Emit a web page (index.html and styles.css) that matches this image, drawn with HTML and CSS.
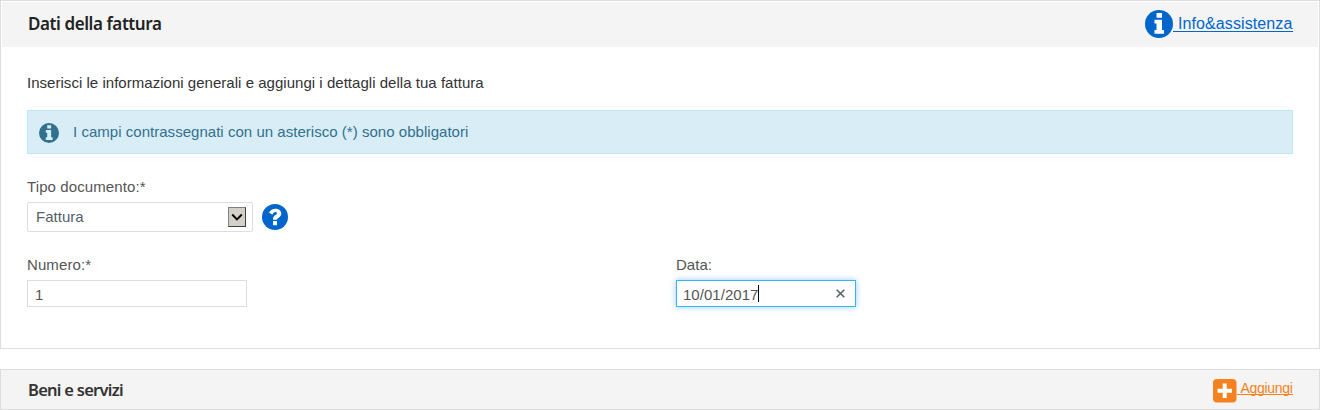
FILE: index.html
```html
<!DOCTYPE html>
<html lang="it">
<head>
<meta charset="utf-8">
<title>Dati della fattura</title>
<link rel="stylesheet" href="styles.css">
</head>
<body>
<section class="panel panel-main">
  <header class="panel-header">
    <h2 class="title">Dati della fattura</h2>
    <a class="help-link" href="#">
      <svg class="help-icon" viewBox="0 0 28 28"><circle cx="14" cy="14" r="14" fill="#0066cc"/><path fill="#fff" d="M11.500 3h5.500v4.700h-5.500zM9.500 9.700H17v10.300h2v3.800H9.500V20h2v-6.500h-2z"/></svg><span class="help-text">&nbsp;Info&amp;assistenza</span>
    </a>
  </header>
  <div class="panel-body">
    <p class="intro">Inserisci le informazioni generali e aggiungi i dettagli della tua fattura</p>
    <div class="alert">
      <svg class="alert-icon" viewBox="0 0 28 28"><circle cx="14" cy="14" r="14" fill="#31708f"/><path fill="#d9edf7" d="M11.500 3h5.500v4.700h-5.500zM9.500 9.700H17v10.300h2v3.800H9.500V20h2v-6.500h-2z"/></svg>
      <span class="alert-text">I campi contrassegnati con un asterisco (*) sono obbligatori</span>
    </div>
    <div class="field field-type">
      <div class="label label-type">Tipo documento:*</div>
      <div class="select-row">
        <div class="select"><span>Fattura</span>
          <span class="select-button"><svg class="chevron" viewBox="0 0 12 8"><path d="M1.200 1.500L6 6.300L10.800 1.500" fill="none" stroke="#000" stroke-width="1.900"/></svg></span>
        </div>
        <svg class="question" viewBox="0 0 26 26"><circle cx="13" cy="13" r="13" fill="#0066cc"/><path fill="#fff" d="M7 8.700C8.400 6 10.500 4.700 13.300 4.700c3.400 0 6 2 6 4.900 0 2.100-1.200 3.300-2.800 4.300-1.100.7-1.500 1-1.500 1.900h-4c0-2.600.7-3.700 2.500-4.800 1-.6 1.400-.9 1.400-1.600 0-.8-.7-1.300-1.600-1.300-1.200 0-1.800.7-2.800 2.400zM11 17h4v4.300h-4z"/></svg>
      </div>
    </div>
    <div class="columns">
      <div class="field">
        <div class="label label-number">Numero:*</div>
        <div class="input input-number">1</div>
      </div>
      <div class="field">
        <div class="label">Data:</div>
        <div class="input input-date"><span class="date">10/01/2017</span><span class="caret"></span>
          <svg class="clear" viewBox="0 0 9 9"><path d="M.7.700l7.600 7.600M8.300.700L.7 8.300" stroke="#4f5e68" stroke-width="1.500"/></svg>
        </div>
      </div>
    </div>
  </div>
</section>
<section class="panel panel-items">
  <h2 class="title title-items">Beni e servizi</h2>
  <a class="add-link" href="#">
    <svg class="add-icon" viewBox="0 0 24 24"><rect width="23.500" height="23.500" rx="4" fill="#f58220"/><path fill="#fff" d="M9.700 4.500h4v5.200H19v4h-5.300V19h-4v-5.300H4.500v-4h5.200z"/></svg><span class="add-text">&nbsp;Aggiungi</span>
  </a>
</section>
</body>
</html>
```
FILE: styles.css
```css
* { box-sizing: border-box; }
body {
  margin: 0;
  background: #fff;
  color: #333;
  font: 15px/20px "Liberation Sans", Arial, sans-serif;
  letter-spacing: 0.03px;
  overflow: hidden;
}
.panel { border: 1px solid #ddd; background: #fff; }
.panel-main { height: 349px; padding: 1px; }
.panel-header {
  height: 45px;
  padding: 0 25.5px 0 26px;
  background: #f4f4f4;
  display: flex;
  justify-content: space-between;
}
.title {
  margin: 0;
  padding-top: 10px;
  color: #222;
  font: 600 17px/24px "Noto Sans", "Open Sans", sans-serif;
  letter-spacing: -0.42px;
}
.help-link { display: flex; padding-top: 8px; color: #0066cc; text-decoration: none; }
.help-icon { width: 28px; height: 28px; }
.help-text { font-size: 16px; line-height: 19px; height: 22px; padding-top: 4px; border-bottom: 1px solid #0066cc; letter-spacing: 0.11px; }
.panel-body { padding: 26px 25px 0; }
.intro { margin: 0; }
.alert {
  display: flex;
  align-items: center;
  gap: 14px;
  height: 44px;
  margin-top: 17px;
  padding: 0 11px;
  border: 1px solid #bce8f1;
  background: #d9edf7;
  color: #31708f;
}
.alert-icon { width: 20px; height: 20px; margin-top: 2px; }
.field-type { margin-top: 23px; }
.label { color: #555; }
.label-type, .label-number { letter-spacing: 0.1px; }
.select-row { display: flex; align-items: center; gap: 9px; margin-top: 5px; }
.select {
  display: flex;
  align-items: center;
  justify-content: space-between;
  width: 226px;
  height: 30px;
  padding: 0 6px 0 8px;
  border: 1px solid #ddd;
  border-radius: 2px;
  color: #555f69;
}
.select-button {
  display: flex;
  align-items: center;
  justify-content: center;
  width: 18px;
  height: 20px;
  background: #d4d0c8;
  border: 1px solid #404040;
  border-top-color: #808080;
  border-left-color: #808080;
}
.chevron { width: 12px; height: 8px; }
.question { width: 26px; height: 26px; }
.columns { display: grid; grid-template-columns: 649px 1fr; margin-top: 23px; }
.input {
  display: flex;
  align-items: center;
  height: 27px;
  margin-top: 5px;
  padding: 2px 7px 0;
  border: 1px solid #ddd;
  color: #555;
}
.input-number { width: 220px; }
.input-date { width: 180px; padding: 0 10px 0 6px; border-color: #33b5f7; box-shadow: 0 0 6px rgba(51, 153, 238, 0.5); }
.date { padding-top: 2px; }
.caret { width: 1px; height: 17px; background: #000; }
.clear { width: 9px; height: 9px; margin-left: auto; }
.panel-items {
  display: flex;
  justify-content: space-between;
  height: 41px;
  margin-top: 20px;
  padding: 0 26.5px 0 27px;
  background: #f4f4f4;
}
.title-items { color: #333; padding-top: 8px; font-size: 16.5px; letter-spacing: -0.74px; }
.add-link { display: flex; padding-top: 9px; color: #f58220; text-decoration: none; }
.add-icon { width: 24px; height: 24px; }
.add-text { height: 16px; font-size: 14px; line-height: 18px; border-bottom: 1px solid #f58220; letter-spacing: -0.3px; }
```
